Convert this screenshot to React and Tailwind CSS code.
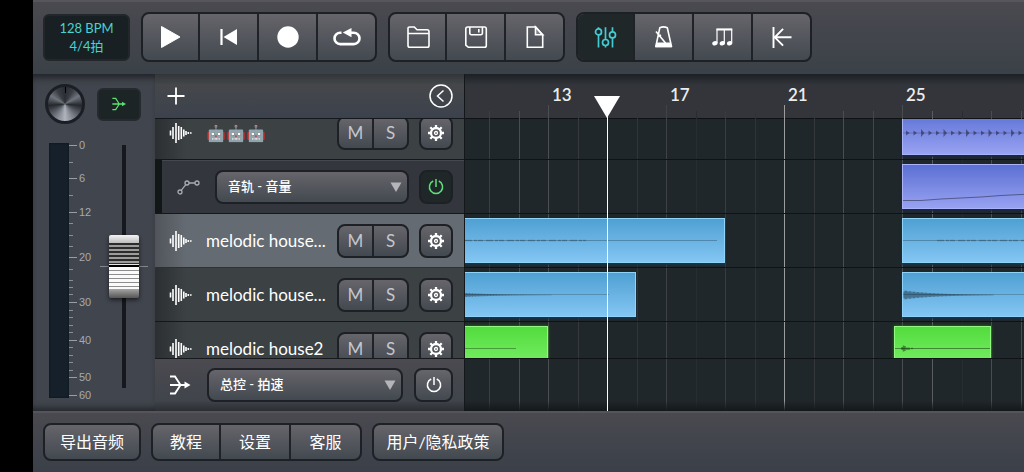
import React, { useState } from 'react';
import clsx from 'clsx';

const BAR_WIDTH = 29.52;
const FIRST_BAR = 10.18;
const barToX = (bar) => Math.round((bar - FIRST_BAR) * BAR_WIDTH);

const GRID = [
  { bar: 11, tone: 'bg-[#3a3f41]' },
  { bar: 12, tone: 'bg-[#4a4d50]' },
  { bar: 13, tone: 'bg-[#4c4f52]', label: true },
  { bar: 14, tone: 'bg-[#363a3c]' },
  { bar: 15, tone: 'bg-[#363a3c]' },
  { bar: 16, tone: 'bg-[#2d3638]' },
  { bar: 17, tone: 'bg-[#3f4345]', label: true },
  { bar: 18, tone: 'bg-[#272e30]' },
  { bar: 19, tone: 'bg-[#373c3e]' },
  { bar: 20, tone: 'bg-[#2b3535]' },
  { bar: 21, tone: 'bg-[#9a9c9e]', label: true },
  { bar: 22, tone: 'bg-[#34383a]' },
  { bar: 23, tone: 'bg-[#4a4d50]' },
  { bar: 24, tone: 'bg-[#44474a]' },
  { bar: 25, tone: 'bg-[#4a4d50]', label: true },
  { bar: 26, tone: 'bg-[#5a5d60]' },
  { bar: 27, tone: 'bg-[#262c2f]' },
  { bar: 28, tone: 'bg-[#4a4d50]' },
  { bar: 29, tone: 'bg-[#4a4d50]' },
];

const TRACKS = [
  { id: 1, name: '🤖🤖🤖', clips: [{ from: 25, to: 30, color: 'indigo', wave: 'beats' }] },
  { id: 2, automation: true, clips: [{ from: 25, to: 30, color: 'indigo', wave: 'ramp' }] },
  {
    id: 3,
    name: 'melodic house...',
    selected: true,
    clips: [
      { from: 9, to: 19, color: 'blue', wave: 'flat' },
      { from: 25, to: 30, color: 'blue', wave: 'flat' },
    ],
  },
  {
    id: 4,
    name: 'melodic house...',
    clips: [
      { from: 10, to: 15.97, color: 'blue', wave: 'tail' },
      { from: 25, to: 30, color: 'blue', wave: 'decay' },
    ],
  },
  {
    id: 5,
    name: 'melodic house2',
    clips: [
      { from: 9, to: 13, color: 'green', wave: 'line' },
      { from: 24.7, to: 28, color: 'green', wave: 'blip' },
    ],
  },
];

const CLIP_COLORS = {
  indigo: 'from-[#5c70d3] to-[#98a2f2] border-[#a9b4f8] shadow-[0_2px_2px_#1b2748]',
  blue: 'from-[#4fa0d3] to-[#83c6f3] border-[#8fd3f8] shadow-[0_2px_2px_#17364e]',
  green: 'from-[#52dc3c] to-[#7af068] border-[#93f784] shadow-[0_0_3px_#1f8a12]',
};

const surface = 'bg-linear-to-b from-[#66656b] to-[#434950]';

/* ---------- icons ---------- */

const Icon = ({ size = 28, box = 28, stroke = 1.6, className, children }) => (
  <svg
    width={size}
    height={size}
    viewBox={`0 0 ${box} ${box}`}
    fill="none"
    stroke="currentColor"
    strokeWidth={stroke}
    className={className}
    aria-hidden="true"
  >
    {children}
  </svg>
);

const PlayIcon = () => (
  <Icon><path d="M4.5 3.5v21L23 14z" fill="currentColor" strokeWidth="1" strokeLinejoin="round" /></Icon>
);

const RewindIcon = () => (
  <Icon>
    <path d="M6.5 6v16" strokeWidth="2.2" />
    <path d="M22 6v16L8.5 14z" fill="currentColor" stroke="none" />
  </Icon>
);

const RecordIcon = () => (
  <Icon><circle cx="14" cy="14" r="10.7" fill="currentColor" stroke="none" /></Icon>
);

const LoopIcon = () => (
  <Icon stroke={2.6}>
    <path d="M8.5 9.7H7.2a5.7 5.7 0 0 0 0 11.4h13.6a5.7 5.7 0 0 0 0-11.4H16" />
    <path d="M9.8 9.6 18.5 5v9.3z" fill="currentColor" stroke="none" />
  </Icon>
);

const FolderIcon = () => (
  <Icon>
    <path d="M4 22.5V5.5A1.5 1.5 0 0 1 5.5 4h4.8l2.7 2.7h10a2 2 0 0 1 2 2v13.8a1.8 1.8 0 0 1-1.8 1.8H5.8A1.8 1.8 0 0 1 4 22.5zM4 10.5h21" />
  </Icon>
);

const SaveIcon = () => (
  <Icon>
    <path d="M3.8 5.8A1.8 1.8 0 0 1 5.6 4h16.9a1.8 1.8 0 0 1 1.8 1.8v16.7a1.8 1.8 0 0 1-1.8 1.8H6.3l-2.5-2.2z" />
    <path d="M7.8 4v6.2a1.5 1.5 0 0 0 1.5 1.5h9.6a1.5 1.5 0 0 0 1.5-1.5V4M16.8 6v3.6" />
  </Icon>
);

const FileIcon = () => (
  <Icon>
    <path d="M6.3 4h8.4l7 8v12.3H6.3z" />
    <path d="M14.5 4v7.8h7.2z" fill="currentColor" fillOpacity="0.25" />
  </Icon>
);

const FadersIcon = () => (
  <Icon stroke={1.7}>
    <path d="M6.5 4.2v1.6M6.5 12v12.5M13.5 4.2v12.1M13.5 22.7v1.8M20.5 4.2v4.6M20.5 15v9.5" />
    <circle cx="6.5" cy="8.9" r="3" />
    <circle cx="13.5" cy="19.5" r="3" />
    <circle cx="20.5" cy="11.9" r="3" />
  </Icon>
);

const MetronomeIcon = () => (
  <Icon>
    <path d="M9.8 4.8c2.5-1.2 5-1.2 7.5 0l4.2 18.7H5.8z" strokeLinejoin="round" />
    <path d="M6.5 19.6h14.3l1 4.6H5.2z" fill="currentColor" stroke="none" />
    <path d="M6 8.5 15.5 20" />
    <path d="M8.2 13.5l2.8-1.5" />
  </Icon>
);

const NotesIcon = () => (
  <Icon stroke={1.2}>
    <path d="M8 20V6.2h14.7V20M15.3 20V6.2" />
    <path d="M7.5 6.6h15.7" strokeWidth="1.8" />
    <g fill="currentColor" stroke="none">
      <ellipse cx="5.9" cy="20.3" rx="2.7" ry="2.1" transform="rotate(-20 5.9 20.3)" />
      <ellipse cx="13.3" cy="20.3" rx="2.7" ry="2.1" transform="rotate(-20 13.3 20.3)" />
      <ellipse cx="20.6" cy="20.3" rx="2.7" ry="2.1" transform="rotate(-20 20.6 20.3)" />
    </g>
  </Icon>
);

const ReturnIcon = () => (
  <Icon stroke={1.9}>
    <path d="M5.5 4v21M6.8 14.3h16.7M15.1 5.8l-8.3 8.5 8.3 8.3" />
  </Icon>
);

const WaveIcon = () => (
  <Icon size={24} box={24} stroke={1.6} className="shrink-0">
    <path d="M2.5 9.5v5M5 6v12M8 2v20M10.7 5v14M13.3 6v12M15.8 8.5v7M18 10v4M20.3 11v2M22.8 11.3v1.4" />
  </Icon>
);

const MergeIcon = ({ size }) => (
  <Icon size={size} box={24} stroke={1.9} className="shrink-0">
    <path d="M2 3.5h5l5.5 8.5M2 20.5h5l5.5-8.5M2 12h16" />
    <path d="M16.5 8.5v7l6-3.5z" fill="currentColor" stroke="none" />
  </Icon>
);

const AutomationIcon = () => (
  <Icon size={24} box={24} stroke={1.3} className="shrink-0 text-[#a8abaf]">
    <circle cx="3" cy="17" r="2" />
    <circle cx="10" cy="8" r="2" />
    <circle cx="20" cy="8" r="2" />
    <path d="M4.2 15.3 8.8 9.7M12 8h6" />
  </Icon>
);

const GearIcon = () => (
  <Icon size={18} box={18} stroke={2.3}>
    <circle cx="9" cy="9" r="5" />
    <circle cx="9" cy="9" r="1.5" strokeWidth="1.3" />
    <path d="M9 1v3M9 14v3M1 9h3M14 9h3M3.300 3.300l2.2 2.2M12.5 12.5l2.2 2.2M14.700 3.300l-2.2 2.2M5.500 12.500l-2.2 2.2" />
  </Icon>
);

const PowerIcon = () => (
  <Icon size={18} box={18} stroke={1.5}>
    <path d="M6.2 3A6.6 6.6 0 1 0 11.8 3M9 1v8" />
  </Icon>
);

/* ---------- controls ---------- */

const ButtonGroup = ({ children }) => (
  <div className={clsx('flex divide-x-2 divide-[#1f2227] overflow-hidden rounded-lg border-2 border-[#1d2025]', surface)}>
    {children}
  </div>
);

const ToolButton = ({ label, active, children }) => (
  <button
    aria-label={label}
    className={clsx(
      'flex h-[46px] w-[59px] items-center justify-center first:w-[57px] last:w-[57px]',
      active ? 'bg-[#1f2729] text-[#45ccd2]' : 'text-white'
    )}
  >
    {children}
  </button>
);

const SquareButton = ({ label, lit, wide, children }) => (
  <button
    aria-label={label}
    className={clsx(
      'flex h-[34px] shrink-0 items-center justify-center rounded-lg border-2',
      wide ? 'w-[39px]' : 'w-[34px]',
      lit ? 'border-[#1d2126] bg-[#1f2729] text-[#5fe07a]' : ['border-[#1d2025] text-white', surface]
    )}
  >
    {children}
  </button>
);

const ParamSelect = ({ label, value }) => (
  <div className="relative min-w-0 grow">
    <select
      aria-label={label}
      defaultValue={value}
      className={clsx(
        'block h-[34px] w-full appearance-none rounded-lg border-2 border-[#1d2025] pl-[11px] text-[13px] font-medium text-white',
        surface
      )}
    >
      <option>{value}</option>
    </select>
    <svg width="12" height="10" viewBox="0 0 12 10" className="pointer-events-none absolute top-3 right-[7px]" aria-hidden="true">
      <path d="M.5.5h11L6 10z" fill="#b4b4b9" />
    </svg>
  </div>
);

const MuteSolo = () => (
  <div className={clsx('flex h-[34px] w-[72px] shrink-0 divide-x-2 divide-[#1f2227] rounded-lg border-2 border-[#1d2025] text-[17px] text-[#c6c6cb]', surface)}>
    <button className="flex-1" aria-label="静音">M</button>
    <button className="flex-1" aria-label="独奏">S</button>
  </div>
);

/* ---------- mixer ---------- */

const MAJOR_TICKS = [[0, 6], [6, 39], [12, 73], [20, 118], [30, 163], [40, 201], [50, 238], [60, 256]];
const MINOR_TICKS = [23, 56, 84, 96, 107, 130, 141, 148, 155, 171, 178, 186, 193, 208, 216, 223, 231];

const LevelScale = () => (
  <svg width="31" height="264" viewBox="0 0 31 264" aria-hidden="true">
    {MINOR_TICKS.map((y) => (
      <path key={y} d={`M0 ${y + 0.5}h4`} stroke="#8b8f94" />
    ))}
    {MAJOR_TICKS.map(([db, y]) => (
      <g key={db}>
        <path d={`M0 ${y + 0.5}h8`} stroke="#9a9ea3" />
        <text x="10" y={y + 4} fontSize="11" fill="#a6a9ae" className="font-['Liberation_Sans',sans-serif]">{db}</text>
      </g>
    ))}
  </svg>
);

const Fader = () => {
  const [level, setLevel] = useState(50);
  return (
    <div className="relative flex h-[243px] w-12 justify-center">
      <div className="w-1 bg-[#15181c]" />
      <div className="absolute inset-x-0 top-[121px] h-px bg-[#83868b]" />
      <div className="absolute top-[90px] left-[9px] flex h-[63px] w-[30px] flex-col overflow-hidden rounded-xs shadow-[0_2px_4px_#0009]">
        <div className="h-2 bg-linear-to-b from-[#f4f4f4] to-[#bdbdbd]" />
        <div className="h-[21px] bg-[repeating-linear-gradient(to_bottom,#2c2c2c_0_2px,#9c9c9c_2px_4px)]" />
        <div className="h-px bg-[#e6e6e6]" />
        <div className="h-0.5 bg-black" />
        <div className="h-[22px] bg-[repeating-linear-gradient(to_bottom,#fafafa_0_3px,#8e8e8e_3px_4px)]" />
        <div className="grow bg-linear-to-b from-[#a5a5a5] to-[#565656]" />
      </div>
      <input
        type="range"
        aria-label="主音量"
        value={level}
        onChange={(e) => setLevel(e.target.value)}
        className="absolute inset-0 h-full w-full opacity-0 [direction:rtl] [writing-mode:vertical-lr]"
      />
    </div>
  );
};

const MixerStrip = () => (
  <aside className="w-[122px] shrink-0 bg-[#41454d] shadow-[inset_0_8px_6px_-4px_#22252a,inset_0_-8px_6px_-5px_#23262a]">
    <div className="flex items-center justify-between pt-[10px] pr-[14px] pl-3">
      <div className="relative flex size-10 justify-center rounded-full border-3 border-[#1b1f25] bg-[conic-gradient(#2a2d33,#3a3d44_30deg,#6f747d_60deg,#25282d_95deg,#70757e_140deg,#b0b4bd_180deg,#70757e_220deg,#25282d_265deg,#6f747d_300deg,#3a3d44_330deg,#2a2d33)]">
        <span className="h-1.5 w-px bg-black" />
        <input type="range" aria-label="声像" className="absolute inset-0 w-full opacity-0" />
      </div>
      <button aria-label="路由" className="flex h-[33px] w-11 items-center justify-center rounded-md border-2 border-[#262a30] bg-[#1c2426] text-[#59e070]">
        <MergeIcon size={16} />
      </button>
    </div>
    <div className="flex pt-[15px] pl-4">
      <div className="mt-1 h-[255px] w-5 bg-[#15202a] shadow-[inset_0_0_2px_#0b1218]" />
      <LevelScale />
      <div className="mt-1.5"><Fader /></div>
    </div>
  </aside>
);

/* ---------- track list ---------- */

const TrackRow = ({ track }) => {
  if (track.automation) {
    return (
      <li className="flex h-[54px] border-b border-[#15181b] bg-[#101716] pl-[7px]">
        <div className="flex grow items-center gap-2.5 border-t border-[#45484e] bg-[#33363c] pr-[11px] pl-[15px]">
          <AutomationIcon />
          <div className="flex grow pl-1"><ParamSelect label="自动化参数" value="音轨 - 音量" /></div>
          <SquareButton label="启用自动化" lit><PowerIcon /></SquareButton>
        </div>
      </li>
    );
  }
  return (
    <li
      className={clsx(
        'flex h-[54px] items-center gap-2.5 border-b pr-[11px] pl-[13px] text-white',
        track.selected
          ? 'border-[#2b3039] bg-linear-to-r from-[#51555b] to-[#656b72] to-10%'
          : 'border-[#15181b] bg-linear-to-r from-[#2b2f31] to-[#3c4144] to-10%'
      )}
    >
      <WaveIcon />
      <span className={clsx('ml-1 grow whitespace-nowrap', track.id === 1 ? 'text-base' : 'text-[17px]')}>{track.name}</span>
      <MuteSolo />
      <SquareButton label="音轨设置"><GearIcon /></SquareButton>
    </li>
  );
};

const TrackList = () => (
  <section className="flex w-[310px] shrink-0 flex-col border-r border-[#15181b]">
    <div className="flex h-[45px] shrink-0 items-center justify-between border-b border-[#15181b] bg-linear-to-b from-[#333639] via-[#45474a] via-25% to-[#3c424d] pr-[11px] pl-[9px] text-white">
      <button aria-label="添加音轨">
        <Icon size={24} box={24} stroke={1.8}><path d="M12 3.5v17M3.5 12h17" /></Icon>
      </button>
      <button aria-label="收起">
        <Icon size={24} box={24} stroke={1.5}>
          <circle cx="12" cy="12" r="11" />
          <path d="M14.5 6.5l-6 5.5 6 5.5" />
        </Icon>
      </button>
    </div>
    <div className="min-h-0 grow overflow-hidden">
      <ul className="-mt-[13px]">
        {TRACKS.map((track) => <TrackRow key={track.id} track={track} />)}
      </ul>
    </div>
    <div className="flex h-[53px] shrink-0 items-center gap-[11px] border-t border-[#17191d] bg-linear-to-b from-[#4b4a50] via-[#40444b] via-80% to-[#2b2e33] pr-[11px] pl-[13px] text-white">
      <MergeIcon size={24} />
      <div className="flex grow pl-1"><ParamSelect label="总控参数" value="总控 - 拍速" /></div>
      <SquareButton label="启用总控" wide><PowerIcon /></SquareButton>
    </div>
  </section>
);

/* ---------- timeline ---------- */

const spikes = (count, height) =>
  Array.from({ length: count }, (_, i) => {
    const h = height(i);
    return `M${i + 1} ${22 - h}V${22 + h}`;
  }).join('');

const Waveform = ({ kind }) => {
  let shape = null;
  if (kind === 'beats') {
    shape = (
      <>
        <path d="M0 22H160" strokeOpacity="0.5" />
        <path
          d={Array.from({ length: 18 }, (_, i) => {
            const h = i % 3 === 2 ? 4 : 2.5;
            return `M${3 + i * 7.5} ${22 - h}l3.5 ${h}l-3.5 ${h}z`;
          }).join('')}
          fill="currentColor"
          stroke="none"
        />
      </>
    );
  } else if (kind === 'ramp') {
    shape = <path d="M0 35.5h18l20-1.5 40-2 20-1.5 30-1.5" />;
  } else if (kind === 'flat') {
    shape = (
      <>
        <path d="M0 21.5H286" strokeOpacity="0.6" />
        <path d="M34 21.5H155" strokeDasharray="7 2 3 1 5 3" strokeWidth="1.5" strokeOpacity="0.5" />
      </>
    );
  } else if (kind === 'tail') {
    shape = (
      <>
        <path d="M0 21.5H148" strokeOpacity="0.5" />
        <path d={spikes(90, (i) => 2.3 * Math.exp(-i / 34) * (i % 3 ? 1 : 0.6))} />
      </>
    );
  } else if (kind === 'decay') {
    shape = (
      <>
        <path d="M0 21.5H148" strokeOpacity="0.5" />
        <path d={spikes(90, (i) => 4.5 * Math.exp(-i / 32) * (i % 4 ? 1 : 0.7))} />
      </>
    );
  } else if (kind === 'line') {
    shape = <path d="M0 21.5H85" strokeOpacity="0.8" />;
  } else if (kind === 'blip') {
    shape = (
      <>
        <path d="M0 21.5H95" />
        <path d="M7 20v3M8.5 18.5v6M10 19v5M12 20.5V23M14 20.5V23M17 20.8v1.5" strokeWidth="1.5" />
      </>
    );
  }
  return (
    <svg width="100%" height="44" stroke="currentColor" fill="none" className="block text-black/40" aria-hidden="true">
      {shape}
    </svg>
  );
};

const Clip = ({ clip }) => {
  const left = barToX(clip.from);
  return (
    <div
      className={clsx('absolute top-1 h-[45px] overflow-hidden border bg-linear-to-b', CLIP_COLORS[clip.color])}
      style={{ left, width: barToX(clip.to) - left }}
    >
      <Waveform kind={clip.wave} />
    </div>
  );
};

const Timeline = () => (
  <section className="relative flex min-w-0 grow flex-col overflow-hidden bg-[#20272a]">
    <div className="h-[45px] shrink-0 border-b border-[#101316] bg-linear-to-b from-[#1c2024] to-[#33353a] to-25%" />
    {GRID.map(({ bar, tone, label }) => (
      <div key={bar} className="absolute inset-y-0" style={{ left: barToX(bar) }}>
        <div className={clsx('absolute bottom-0 w-px', tone, label ? 'top-[31px]' : 'top-[37px]')} />
        {label && <span className="absolute top-[9px] left-1 text-[17px] leading-6 font-semibold text-[#ececee]">{bar}</span>}
      </div>
    ))}
    <div className="relative min-h-0 grow overflow-hidden">
      <div className="-mt-[13px]">
        {TRACKS.map((track) => (
          <div key={track.id} className="relative h-[54px] border-b border-[#101316]">
            {track.clips.map((clip) => <Clip key={clip.from} clip={clip} />)}
          </div>
        ))}
      </div>
    </div>
    <div className="relative h-[53px] shrink-0 border-t border-[#101316] bg-linear-to-b from-transparent from-80% to-[#14181a]" />
    <div className="absolute inset-y-0" style={{ left: barToX(15) }}>
      <svg width="26" height="22" viewBox="0 0 26 22" className="absolute top-[22px] -left-[13px]" aria-hidden="true">
        <path d="M0 0h26L13 22z" fill="#fff" />
      </svg>
      <div className="absolute top-10 bottom-0 w-px bg-white" />
    </div>
  </section>
);

/* ---------- bars ---------- */

const Toolbar = () => (
  <header className="flex h-[74px] shrink-0 items-center gap-[11px] border-t-2 border-[#57565c] bg-linear-to-b from-[#4a4950] to-[#3b4148] pb-0.5 pl-2.5">
    <button className="h-[47px] w-[87px] rounded-md border-2 border-[#23272c] bg-[#192023] text-[13px] leading-[18px] text-[#48d2d4]">
      <span className="block">128 BPM</span>
      <span className="block">4/4拍</span>
    </button>
    <ButtonGroup>
      <ToolButton label="播放"><PlayIcon /></ToolButton>
      <ToolButton label="回到开头"><RewindIcon /></ToolButton>
      <ToolButton label="录音"><RecordIcon /></ToolButton>
      <ToolButton label="循环"><LoopIcon /></ToolButton>
    </ButtonGroup>
    <ButtonGroup>
      <ToolButton label="打开"><FolderIcon /></ToolButton>
      <ToolButton label="保存"><SaveIcon /></ToolButton>
      <ToolButton label="新建"><FileIcon /></ToolButton>
    </ButtonGroup>
    <ButtonGroup>
      <ToolButton label="混音器" active><FadersIcon /></ToolButton>
      <ToolButton label="节拍器"><MetronomeIcon /></ToolButton>
      <ToolButton label="音符"><NotesIcon /></ToolButton>
      <ToolButton label="返回"><ReturnIcon /></ToolButton>
    </ButtonGroup>
  </header>
);

const BottomBar = () => (
  <footer className="flex h-[61px] shrink-0 items-center gap-2.5 border-t-2 border-[#55545b] bg-linear-to-b from-[#4a4950] to-[#3a4049] pb-0.5 pl-2.5 text-base text-white">
    <ButtonGroup>
      <button className="h-[34px] w-[94px]">导出音频</button>
    </ButtonGroup>
    <ButtonGroup>
      <button className="h-[34px] w-[68px]">教程</button>
      <button className="h-[34px] w-[70px]">设置</button>
      <button className="h-[34px] w-[69px]">客服</button>
    </ButtonGroup>
    <ButtonGroup>
      <button className="h-[34px] w-32">用户/隐私政策</button>
    </ButtonGroup>
  </footer>
);

export default function App() {
  return (
    <div className="flex h-screen flex-col bg-black pl-[33px] font-[Lato,'Noto_Sans_CJK_SC',sans-serif]">
      <Toolbar />
      <main className="flex min-h-0 grow">
        <MixerStrip />
        <TrackList />
        <Timeline />
      </main>
      <BottomBar />
    </div>
  );
}
